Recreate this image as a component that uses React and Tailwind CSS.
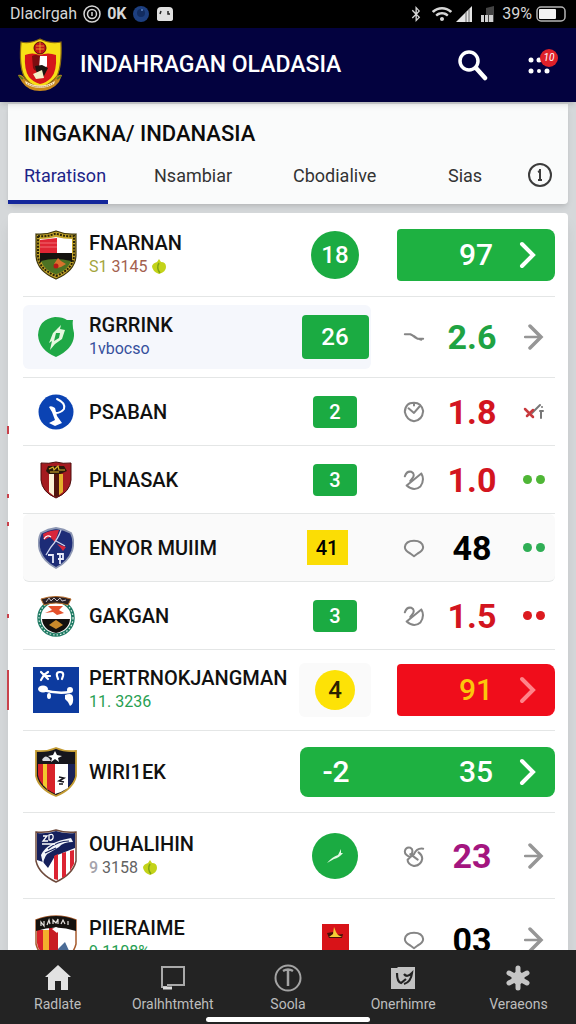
import { useState } from 'react';
import { FaWifi, FaBluetoothB } from 'react-icons/fa';

const TABS = ['Rtaratison', 'Nsambiar', 'Cbodialive', 'Sias'];

/* ---------- Crests ---------- */

const HeaderCrest = () => (
  <svg viewBox="0 0 48 54" className="w-12 h-[54px]" aria-hidden="true">
    <path d="M5 4 Q14 6 24 1 Q34 6 45 4 Q46 28 41 38 Q35 46 24 50 Q12 46 8 38 Q3 28 5 4Z" fill="#f8df16" stroke="#8a6a12" strokeWidth="1.2" />
    <path d="M9 17 Q16 14 24 17 Q32 14 40 17 Q41 34 35 40 Q30 45 24 46 Q17 44 13 39 Q8 32 9 17Z" fill="#d4151b" />
    <path d="M16 18 Q19 16 24 18 L24 30 Q20 36 17 30 Z" fill="#7d0d10" />
    <path d="M24 18 H31 V28 L27 34 L23 30Z" fill="#fff" />
    <path d="M19 28 L26 27 L32 30 L28 38 L21 36Z" fill="#1b1410" />
    <path d="M17 36 L26 32 L28 40 L20 41Z" fill="#f4efc8" />
    <circle cx="24" cy="10" r="6" fill="#c4161c" stroke="#5d0a0c" />
    <path d="M20 8 H28 M20 11 H28 M24 4 V15" stroke="#f0b32a" strokeWidth="0.8" />
    <path d="M2 37 Q6 36 9 41 Q16 48 24 48 Q33 48 39 41 Q42 36 46 37 L43 44 Q36 53 24 53 Q12 53 6 44Z" fill="#c9891d" />
    <path d="M9 43 Q24 52 39 43 L38 46 Q24 54 10 46Z" fill="#fbe8c0" />
    <path d="M11 45.5 Q24 52.500 37 45.500" fill="none" stroke="#7f4a18" strokeWidth="0.8" strokeDasharray="1 1" />
    <path d="M3 38 L7 41 M45 38 L41 41" stroke="#5b7a1e" strokeWidth="2" />
  </svg>
);

const GoldShield = () => (
  <svg viewBox="0 0 42 50" className="w-[42px] h-[50px]" aria-hidden="true">
    <path d="M1 4 Q11 5 21 1 Q31 5 41 4 V26 Q40 41 21 49 Q2 41 1 26Z" fill="#c5a52a" stroke="#3e360c" strokeWidth="1.200" />
    <path d="M3 6 Q12 7 21 3.500 Q30 7 39 6 V26 Q38 39 21 46 Q4 39 3 26Z" fill="none" stroke="#292408" strokeWidth="2" strokeDasharray="2 1.200" />
    <path d="M5 9 Q13 9 21 7 Q29 9 37 9 V24 H5Z" fill="#fff" />
    <path d="M5 10 Q13 9 22 8 V23 H5Z" fill="#df2533" />
    <path d="M5 13 H22 M5 17 H22" stroke="#f16c74" />
    <path d="M5 23 H37 V32 H5Z" fill="#15130f" />
    <path d="M6 31 Q20 27 36 31 Q33 40 21 44.500 Q9 40 6 31Z" fill="#4d7223" />
    <path d="M23 28 L26 31 L31 34 L26 37 L22 38 L19 34Z" fill="#d8722d" />
    <circle cx="21" cy="36" r="2.500" fill="#b71a17" />
  </svg>
);

const GreenLeaf = () => (
  <svg viewBox="0 0 36 42" className="w-9 h-[42px]" aria-hidden="true">
    <path d="M17 1 Q25 1 29 4 L35 4 Q34 9 36 17 Q37 32 18 41 Q1 34 0 19 Q1 3 17 1Z" fill="#1fa846" />
    <path d="M23 9 L20 12 L15 17 L11 27 L14 25 L12 34 L17 28 L24 23 L27 14 L22 13Z" fill="#e6f8df" />
    <path d="M18 17 L22 17 L21 22 L16 25Z" fill="#1fa846" />
  </svg>
);

const BlueRound = () => (
  <svg viewBox="0 0 36 36" className="w-9 h-9" aria-hidden="true">
    <circle cx="18" cy="18" r="17.500" fill="#0b43b3" />
    <path d="M19 5 Q28 9 26 15 Q23 19 17 19" fill="none" stroke="#fff" strokeWidth="2" strokeLinecap="round" />
    <path d="M11 13 Q13 11 17 14 L19 22 L24 29 L17 32 L11 29 L17 26 L14 18Z" fill="#fff" />
  </svg>
);

const RedShield = () => (
  <svg viewBox="0 0 32 38" className="w-8 h-[38px]" aria-hidden="true">
    <path d="M1 2 Q9 3 16 1 Q23 3 31 2 V19 Q30 31 16 37 Q2 31 1 19Z" fill="#a51b20" stroke="#4c0c0c" />
    <path d="M9 13 H14 V35 L9 31Z" fill="#fbf3d8" />
    <path d="M14 13 H19 V35 L16 36 L14 35Z" fill="#51140d" />
    <path d="M19 13 H23 V31 L19 34Z" fill="#e3b02b" />
    <path d="M8 5 H24 L27 10 L20 13 H9 L6 10Z" fill="#29180a" />
    <path d="M9 8 L13 6 L14 9 L18 5 L19 9 L25 9 M10 11 H19" stroke="#d9b22c" strokeWidth="1.200" fill="none" />
  </svg>
);

const NavyShield = () => (
  <svg viewBox="0 0 36 42" className="w-9 h-[42px]" aria-hidden="true">
    <path d="M3 6 Q10 2 18 1 Q26 2 33 6 Q37 14 34 24 Q30 35 18 41 Q6 35 2 24 Q-1 14 3 6Z" fill="#1d2c77" stroke="#8d97b3" strokeWidth="1.800" />
    <path d="M5 7 Q12 3 21 3 L17 15 L12 10 L6 13Z" fill="#d7263b" />
    <path d="M6 12 Q9 7 13 10" stroke="#fff" strokeWidth="1.200" fill="none" />
    <path d="M23 3 Q20 12 13 20 L8 28 M18 14 L27 19" stroke="#cfd6ee" strokeWidth="1.300" fill="none" />
    <path d="M19 17 L28 20 L25 24 L22 20Z" fill="#d7263b" />
    <path d="M10 28 H15 V36 M19 27 H25 V32 H20 M22 27 V37" stroke="#e7eafa" strokeWidth="1.800" fill="none" />
  </svg>
);

const WreathCrest = () => (
  <svg viewBox="0 0 38 42" className="w-[38px] h-[42px]" aria-hidden="true">
    <circle cx="19" cy="23" r="17" fill="#fff" stroke="#1e7a63" strokeWidth="3.500" />
    <circle cx="19" cy="23" r="17" fill="none" stroke="#e0efe9" strokeWidth="1.200" strokeDasharray="1.500 2" />
    <path d="M5 24 H33 Q32 35 19 38 Q6 35 5 24Z" fill="#13110f" />
    <path d="M19 25 L22 27 L26 30 L19 34 L12 30 L16 27Z" fill="#c88a2b" />
    <path d="M11 11 L26 11 L22 15 L27 18 L20 20 L16 17 L8 18 L15 15Z" fill="#e4512c" />
    <path d="M4 4 Q19 -1 34 4 L31 10 Q19 6 7 10Z" fill="#2b2022" stroke="#b46a2a" />
    <path d="M9 7 L12 3 L14 6 L17 3 L20 6 L23 3 L25 6 L29 5" stroke="#d2cfd8" strokeWidth="0.900" fill="none" />
  </svg>
);

const BlueSquare = () => (
  <svg viewBox="0 0 46 46" className="w-[46px] h-[46px]" aria-hidden="true">
    <rect width="46" height="46" fill="#0d3b9f" />
    <path d="M8 5 L15 12 M15 5 L11 8 L8 13 M12 9 H17" stroke="#fff" strokeWidth="2.200" fill="none" strokeLinecap="round" />
    <path d="M24 9 Q23 5 27 5 Q31 5 30 9 L29 12 M24 9 L25 12" stroke="#fff" strokeWidth="2.200" fill="none" strokeLinecap="round" />
    <ellipse cx="10" cy="22" rx="5" ry="3.500" fill="#fff" />
    <path d="M10 23 Q24 27 37 25" stroke="#fff" strokeWidth="2.500" fill="none" />
    <circle cx="37" cy="23" r="3" fill="#fff" />
    <ellipse cx="16" cy="29" rx="2" ry="3" fill="#fff" />
    <path d="M32 28 Q39 25 40 30 Q41 37 37 39 Q35 34 32 32Z" fill="#fff" />
  </svg>
);

const StripedShield = () => (
  <svg viewBox="0 0 42 50" className="w-[42px] h-[50px]" aria-hidden="true">
    <path d="M1 4 Q12 5 21 1 Q30 5 41 4 V29 Q38 42 21 49 Q4 42 1 29Z" fill="#16151c" stroke="#c39b33" strokeWidth="1.800" />
    <path d="M3 17 H9 V39 Q4 34 3 28Z" fill="#d8232a" />
    <path d="M8 17 H13 V43 L8 38Z" fill="#f2c72d" />
    <path d="M12 17 H21 V47 Q16 45 12 42Z" fill="#d8232a" />
    <path d="M20 17 H33 V41 Q27 45 20 47Z" fill="#fff" />
    <path d="M33 17 H40 V29 Q38 36 33 40Z" fill="#1b2358" />
    <path d="M20 4 L22 8 L27 9 L23 11 L24 15 L20 12 L16 15 L17 11 L13 9 L18 8Z" fill="#fff" />
    <path d="M7 13 Q10 7 14 11 L16 14 H8Z" fill="#d8d9de" />
    <path d="M24 30 L29 31 L24 34 L29 35 M24 37 H28" stroke="#16151c" strokeWidth="1.500" fill="none" />
  </svg>
);

const StripeEagle = () => (
  <svg viewBox="0 0 42 54" className="w-[42px] h-[54px]" aria-hidden="true">
    <path d="M1 3 Q12 4 21 1 Q30 4 41 3 V32 Q38 45 21 53 Q4 45 1 32Z" fill="#fff" stroke="#6e4a3c" strokeWidth="1.500" />
    <path d="M2 4 Q12 5 21 2 Q30 5 40 4 V19 L20 27 L13 39 L8 33 L2 31Z" fill="#16205c" />
    <path d="M19 27 L23 25 V51 L19 50Z M27 24 L31 23 V47 L27 49Z M35 22 L39 21 V35 L35 42Z" fill="#dc2432" />
    <path d="M6 26 Q12 13 36 9 L38 13 Q28 13 24 18 L14 24 Q10 25 8 35Z" fill="#f3f5fb" />
    <path d="M13 20 Q23 12 34 12 M10 24 L21 19" stroke="#16205c" strokeWidth="1.200" fill="none" />
    <path d="M8 7 H12 L8 12 H13 M14 6 Q19 4 18 9 Q17 12 14 11Z M7 15 H20" stroke="#fff" strokeWidth="1.300" fill="none" />
  </svg>
);

const BlackTopShield = () => (
  <svg viewBox="0 0 42 50" className="w-[42px] h-[50px]" aria-hidden="true">
    <path d="M1 5 Q21 -3 41 5 V29 Q38 42 21 49 Q4 42 1 29Z" fill="#fff" stroke="#a75b2d" strokeWidth="1.500" />
    <path d="M2 15 H10 V40 Q3 36 2 28Z" fill="#d8232a" />
    <path d="M8 15 H15 V44 L8 38Z" fill="#f3b02c" />
    <path d="M14 13 H23 V47 L14 44Z" fill="#c81d24" />
    <path d="M23 34 L30 27 L36 40 L23 47Z" fill="#4b6c96" />
    <path d="M1 5 Q21 -3 41 5 V16 Q21 9 1 16Z" fill="#15120f" />
    <path d="M6 11 V7 L9 11 V6 M12 10 L14 5 L15 9 M18 9 V5 L21 8 L23 4 V9 M26 9 L28 5 L30 9 M33 6 V10" stroke="#e7e4e0" strokeWidth="1.200" fill="none" />
    <path d="M17 14 L21 12 L25 14 L22 18Z" fill="#fff" />
  </svg>
);

/* ---------- Small marks ---------- */

const Leaf = () => (
  <svg viewBox="0 0 16 16" className="w-4 h-4" aria-hidden="true">
    <path d="M8 0 L10 3 Q15 3 15 8 Q15 13 8 15 Q1 12 1 7 Q2 4 6 3Z" fill="#c3d319" />
    <path d="M8 4 Q5 9 9 14" stroke="#7fa512" strokeWidth="1.500" fill="none" />
  </svg>
);

const MARKS = {
  dash: <path d="M2 9 L8 9 L12 11 L16 14 L22 14 M10 10 L14 13 L20 15" />,
  clock: <path d="M5 4 Q2 7 2 12 Q4 21 12 22 Q21 21 22 11 Q20 2 12 2 Q7 2 5 4 M6 8 L12 13 L18 6 M12 2 V5" />,
  swirl: <path d="M2 8 Q4 2 9 3 Q13 5 11 9 L8 13 M20 5 L4 18 M20 5 Q24 12 19 19 Q12 25 4 18" />,
  drop: <path d="M12 21 L8 18 Q2 15 2 11 Q3 4 12 4 Q21 4 22 11 Q22 15 16 18Z" />,
  heart: <path d="M8 13 Q2 11 2 7 Q3 2 8 3 Q12 5 9 11 M22 4 Q15 3 12 10 Q8 13 5 16 Q5 21 12 23 Q20 22 21 15 Q21 11 17 8 M8 10 L16 16" />,
};

const Mark = ({ name }) => (
  <svg viewBox="0 0 24 24" className="w-[22px] h-[22px]" fill="none" stroke="#858585" strokeWidth="2.200" strokeLinecap="round" strokeLinejoin="round" aria-hidden="true">
    {MARKS[name]}
  </svg>
);

const Dots = ({ className }) => (
  <span className="flex gap-1">
    <span className={`w-[9px] h-[9px] rounded-full ${className}`} />
    <span className={`w-[9px] h-[9px] rounded-full ${className}`} />
  </span>
);

const Arrow = () => (
  <svg viewBox="0 0 20 26" className="w-5 h-[26px]" fill="none" stroke="#969696" strokeLinecap="round" aria-hidden="true">
    <path d="M1 13 H16" strokeWidth="2.500" />
    <path d="M6 2 L17 13 L6 24" strokeWidth="3.500" />
  </svg>
);

const Chevron = ({ className }) => (
  <svg viewBox="0 0 18 28" className={`w-[18px] h-7 ${className}`} fill="none" stroke="currentColor" strokeWidth="4" aria-hidden="true">
    <path d="M3 3 L14 14 L3 25" strokeLinecap="round" />
  </svg>
);

const Cross = () => (
  <svg viewBox="0 0 22 18" className="w-[22px] h-[18px]" fill="none" strokeLinecap="round" aria-hidden="true">
    <path d="M9 10 L17 2" stroke="#777" strokeWidth="2" />
    <path d="M2 6 L10 14 M4 13 L10 7" stroke="#c83a3e" strokeWidth="2.500" />
    <path d="M17 8 H20 M18 8 V15" stroke="#777" strokeWidth="2" />
    <circle cx="19" cy="4" r="1" fill="#777" />
  </svg>
);

const Flag = () => (
  <svg viewBox="0 0 27 32" className="w-[27px] h-8" aria-hidden="true">
    <rect width="27" height="32" fill="#d81318" />
    <path d="M5 9 L11 8 L14 11 L21 10 L20 14 H7Z" fill="#4a1109" />
    <path d="M12 3 L14 8 L16 11 L20 13 H7 L11 10Z" fill="#f6cb35" />
  </svg>
);

const GreenSwoosh = () => (
  <span className="w-[46px] h-[46px] rounded-full bg-[#1bab42] flex items-center justify-center">
    <svg viewBox="0 0 18 16" className="w-[18px] h-4" aria-hidden="true">
      <path d="M1 15 Q6 9 12 7 L15 1 L15 5 L17 5 Q13 10 8 11Z" fill="#e2fbe3" />
    </svg>
  </span>
);

const TEAMS = [
  {
    name: 'FNARNAN', crest: <GoldShield />, height: 'h-[84px]',
    sub: <><span className="text-[#a4a53d]">S1</span> <span className="text-[#a3604e]">3145</span></>, subStyle: 'text-base', leaf: true,
    badge: '18', badgeStyle: 'w-12 h-12 rounded-full bg-[#1bab42] text-white text-2xl',
    value: '97', valueStyle: 'text-white', pill: 'bg-[#1eb141]', action: <Chevron className="text-white" />,
  },
  {
    name: 'RGRRINK', crest: <GreenLeaf />, height: 'h-[81px]', panel: 'bg-[#f5f7fc]',
    sub: '1vbocso', subStyle: 'text-base text-[#35509c]',
    badge: '26', badgeStyle: 'w-[67px] h-11 rounded bg-[#1bab42] text-white text-2xl',
    mark: 'dash', value: '2.6', valueStyle: 'text-[#1fa343]', action: <Arrow />,
  },
  {
    name: 'PSABAN', crest: <BlueRound />, height: 'h-[68px]', edge: 'top-12 h-2',
    badge: '2', badgeStyle: 'w-11 h-8 rounded bg-[#1bab42] text-white text-xl',
    mark: 'clock', value: '1.8', valueStyle: 'text-[#d3151f]', action: <Cross />,
  },
  {
    name: 'PLNASAK', crest: <RedShield />, height: 'h-[68px]', edge: 'top-12 h-1',
    badge: '3', badgeStyle: 'w-11 h-8 rounded bg-[#1bab42] text-white text-xl',
    mark: 'swirl', value: '1.0', valueStyle: 'text-[#d3151f]', action: <Dots className="bg-[#4fb636]" />,
  },
  {
    name: 'ENYOR MUIIM', crest: <NavyShield />, height: 'h-[68px]', rowStyle: 'bg-[#fafafa] rounded-md', edge: 'top-2 h-1', badgeShift: 'pr-4',
    badge: '41', badgeStyle: 'w-[41px] h-[35px] bg-[#fbdd05] text-black text-xl',
    mark: 'drop', value: '48', valueStyle: 'text-black', action: <Dots className="bg-[#2fae55]" />,
  },
  {
    name: 'GAKGAN', crest: <WreathCrest />, height: 'h-[68px]', edge: 'top-8 h-1',
    badge: '3', badgeStyle: 'w-11 h-8 rounded bg-[#1bab42] text-white text-xl',
    mark: 'swirl', value: '1.5', valueStyle: 'text-[#d3151f]', action: <Dots className="bg-[#dc1a1f]" />,
  },
  {
    name: 'PERTRNOKJANGMAN', crest: <BlueSquare />, height: 'h-[81px]', edge: 'top-5 h-10', badgePanel: 'bg-[#fafafa]',
    sub: '11. 3236', subStyle: 'text-base text-[#27a052]',
    badge: '4', badgeStyle: 'w-10 h-10 rounded-full bg-[#fde206] text-[#2b2200] text-2xl',
    value: '91', valueStyle: 'text-[#fcc60c]', pill: 'bg-[#f00d1b]', action: <Chevron className="text-[#ff8489]" />,
  },
  {
    name: 'WIRI1EK', crest: <StripedShield />, height: 'h-[82px]',
    badge: '-2', value: '35', wide: true, action: <Chevron className="text-white" />,
  },
  {
    name: 'OUHALIHIN', crest: <StripeEagle />, height: 'h-[86px]',
    sub: <><span className="font-medium text-[#a5a3ab]">9</span> 3158</>, subStyle: 'text-base text-[#636363]', leaf: true,
    badge: <GreenSwoosh />,
    mark: 'heart', value: '23', valueStyle: 'text-[#a4157f]', action: <Arrow />,
  },
  {
    name: 'PIIERAIME', crest: <BlackTopShield />, height: 'h-[82px]',
    sub: '9.1108%', subStyle: 'text-base text-[#27a052]',
    badge: <Flag />,
    mark: 'drop', value: '03', valueStyle: 'text-black', action: <Arrow />,
  },
];

const TeamRow = ({ team }) => (
  <li className={`relative flex items-center border-b border-[#e4e6e6] ${team.height} ${team.rowStyle || ''}`}>
    {team.edge && <span className={`absolute -left-4 w-0.5 bg-[#c9424c] ${team.edge}`} />}

    {/* Crest, name and badge */}
    <div className={`flex flex-1 min-w-0 items-center h-16 rounded-md ${team.panel || ''}`}>
      <span className="w-[66px] flex justify-center shrink-0">{team.crest}</span>
      <div className="flex-1 min-w-0 whitespace-nowrap">
        <p className={`text-xl font-medium text-[#111] ${team.sub ? 'leading-6' : 'leading-7'}`}>{team.name}</p>
        {team.sub && (
          <p className={`flex items-center gap-1 leading-6 ${team.subStyle}`}>
            <span>{team.sub}</span> {team.leaf && <Leaf />}
          </p>
        )}
      </div>
      {!team.wide && (
        <span className={`w-[72px] h-[54px] flex items-center justify-center rounded-md shrink-0 ${team.badgePanel || ''} ${team.badgeShift || ''}`}>
          {team.badgeStyle ? (
            <span className={`flex items-center justify-center font-medium ${team.badgeStyle}`}>{team.badge}</span>
          ) : team.badge}
        </span>
      )}
    </div>

    {/* Score and action */}
    {team.wide ? (
      <button className="flex items-center w-[255px] h-[50px] rounded-lg bg-[#1eb141] text-white font-medium text-3xl">
        <span className="w-[72px] text-center">{team.badge}</span>
        <span className="flex-1" />
        <span className="w-[50px] text-center">{team.value}</span>
        <span className="w-[54px] flex justify-center">{team.action}</span>
      </button>
    ) : team.pill ? (
      <button className={`flex items-center justify-end w-[158px] h-[52px] ml-[26px] rounded-l-sm rounded-r-lg font-medium text-3xl ${team.pill}`}>
        <span className={`w-[50px] text-center ${team.valueStyle}`}>{team.value}</span>
        <span className="w-[54px] flex justify-center">{team.action}</span>
      </button>
    ) : (
      <div className="flex items-center w-[158px] ml-[26px]">
        <span className="w-[34px] flex justify-center"><Mark name={team.mark} /></span>
        <span className={`w-[82px] text-center text-[34px] leading-9 font-bold ${team.valueStyle}`}>{team.value}</span>
        <button className="w-[42px] flex justify-center" aria-label={`Open ${team.name}`}>{team.action}</button>
      </div>
    )}
  </li>
);

const StatusBar = () => (
  <div className="h-7 px-[10px] flex items-center justify-between bg-black text-[#d6d6d6] text-base shrink-0">
    <div className="flex items-center gap-1.5">
      <span>Dlaclrgah</span>
      <svg viewBox="0 0 18 18" className="w-[18px] h-[18px]" fill="none" stroke="currentColor" strokeWidth="1.500" aria-hidden="true">
        <circle cx="9" cy="9" r="8" />
        <circle cx="9" cy="9" r="4.500" />
        <path d="M9 7 V11" />
      </svg>
      <span className="font-bold">0K</span>
      <svg viewBox="0 0 16 16" className="w-4 h-4" aria-hidden="true">
        <circle cx="8" cy="8" r="8" fill="#1d3f80" />
        <circle cx="8" cy="7" r="4" fill="#122c60" />
        <circle cx="9" cy="4" r="1" fill="#5d83c4" />
      </svg>
      <svg viewBox="0 0 16 16" className="w-4 h-4 ml-0.5" aria-hidden="true">
        <path d="M4 1 H12 Q16 1 16 5 V13 Q16 15 13 15 H3 Q0 15 0 13 V5 Q0 1 4 1Z" fill="#e0e0e0" />
        <path d="M4 5 L3 8 M11 5 V8 L13 8" stroke="#222" strokeWidth="1.500" fill="none" />
      </svg>
    </div>
    <div className="flex items-center gap-1">
      <FaBluetoothB className="text-base mr-1" />
      <FaWifi className="text-xl" />
      <svg viewBox="0 0 16 16" className="w-4 h-4" aria-hidden="true">
        <path d="M0 16 L16 0 V16Z" fill="#e5e5e5" />
        <path d="M10 6 V16 M13 3 V16" stroke="#666" />
      </svg>
      <svg viewBox="0 0 14 16" className="w-[14px] h-4 ml-1" aria-hidden="true">
        <path d="M6 8 V2 L14 0 V16 H6Z" fill="#444" />
        <path d="M1 16 V9 H4 V16Z M5 16 V9 H8 V16Z M9 16 V9 H13 V16Z" fill="#d0d0d0" />
      </svg>
      <span className="ml-1">39%</span>
      <svg viewBox="0 0 30 16" className="w-[30px] h-4" aria-hidden="true">
        <rect x="1" y="1" width="28" height="14" rx="4" fill="none" stroke="#b5b5b5" strokeWidth="1.500" />
        <rect x="3" y="3" width="17" height="10" rx="1" fill="#f2f2f2" />
      </svg>
    </div>
  </div>
);

const Header = () => (
  <header className="relative z-10 h-[74px] pl-4 pr-3 flex items-center bg-[#03023f] text-white shadow-md shrink-0">
    <HeaderCrest />
    <h1 className="flex-1 ml-4 text-[23px] font-medium whitespace-nowrap">INDAHRAGAN OLADASIA</h1>
    <button className="w-8 h-8 mr-9" aria-label="Search">
      <svg viewBox="0 0 32 32" className="w-8 h-8" fill="none" stroke="currentColor" strokeLinecap="round">
        <circle cx="13" cy="12" r="9" strokeWidth="3.500" />
        <path d="M20 19 L29 29" strokeWidth="4.500" />
      </svg>
    </button>
    <button className="relative w-10 h-9" aria-label="Menu">
      <svg viewBox="0 0 40 36" className="w-10 h-9" fill="currentColor">
        <circle cx="7" cy="13" r="2.500" /><circle cx="15" cy="13" r="2.500" />
        <circle cx="7" cy="24" r="2.500" /><circle cx="15" cy="24" r="2" /><circle cx="23" cy="24" r="2.500" />
      </svg>
      <span className="absolute top-0.5 right-1.5 w-[18px] h-[18px] rounded-full bg-[#df2029] text-[10px] leading-[18px] text-center italic">10</span>
    </button>
  </header>
);

const NAV = [
  {
    label: 'Radlate',
    icon: <path d="M14 1 L27 13 H24 V26 H17 V17 H11 V26 H4 V13 H1Z" fill="#e2e2e2" />,
  },
  {
    label: 'Oralhhtmteht',
    icon: (
      <g fill="none" stroke="#a9a9a9" strokeWidth="2">
        <path d="M8 23 H3 V3 H25 V21 H8" />
        <path d="M4 24 H13" stroke="#dcdcdc" strokeWidth="3" />
      </g>
    ),
  },
  {
    label: 'Soola',
    icon: (
      <g fill="none" stroke="#a3a3a3" strokeWidth="2">
        <circle cx="14" cy="14" r="12.500" />
        <path d="M9 7 Q14 4 19 7 M14 6 V22" strokeWidth="2.500" />
      </g>
    ),
  },
  {
    label: 'Onerhimre',
    icon: (
      <g>
        <path d="M2 4 H8 L9 3 H26 V25 H2Z" fill="#c2c2c2" />
        <path d="M8 9 Q8 18 12 19 L17 15 M15 10 Q18 14 23 9 Q22 18 15 20" stroke="#222" strokeWidth="2.200" fill="none" />
      </g>
    ),
  },
  {
    label: 'Veraeons',
    icon: (
      <g stroke="#c6c6c6" strokeWidth="5" strokeLinecap="round">
        <path d="M14 4 V24 M5 9 L23 19 M23 9 L5 19" />
        <circle cx="14" cy="14" r="4" fill="#c6c6c6" />
      </g>
    ),
  },
];

const BottomNav = () => (
  <nav className="relative h-[74px] grid grid-cols-5 bg-[#232323] text-[#bdbdbd] shrink-0">
    {NAV.map((item) => (
      <a key={item.label} href="#" className="flex flex-col items-center pt-[14px] text-sm leading-5">
        <svg viewBox="0 0 28 28" className="w-7 h-7 mb-0.5" aria-hidden="true">{item.icon}</svg>
        {item.label}
      </a>
    ))}
    <span className="absolute bottom-0.5 left-1/2 -translate-x-1/2 w-[164px] h-[5px] rounded-full bg-white" />
  </nav>
);

const App = () => {
  const [activeTab, setActiveTab] = useState(TABS[0]);

  return (
    <div className="h-screen flex flex-col overflow-hidden bg-[#d5d8da] font-[Roboto,sans-serif]">
      <StatusBar />
      <Header />

      <main className="flex-1 min-h-0 overflow-hidden px-2 pt-0.5">
        {/* Title and tabs */}
        <section className="h-[100px] mb-[9px] flex flex-col justify-between rounded-b bg-[#fafbfb] shadow-md">
          <h2 className="px-4 pt-[14px] text-[22px] leading-8 font-medium text-[#0c0c0c]">IINGAKNA/ INDANASIA</h2>
          <div className="grid grid-cols-[130fr_139fr_155fr_80fr_56fr] text-lg text-[#333]">
            {TABS.map((tab) => (
              <button
                key={tab}
                onClick={() => setActiveTab(tab)}
                className={`justify-self-start h-12 pl-4 pr-0.5 pb-1 border-b-4 text-left ${activeTab === tab ? 'border-[#14279b] text-[#1d2488]' : 'border-transparent'}`}
              >
                {tab}
              </button>
            ))}
            <button className="h-12 pb-2 flex items-end justify-center" aria-label="Info">
              <svg viewBox="0 0 26 26" className="w-[26px] h-[26px] mb-2" fill="none" stroke="#3c3c3c" strokeWidth="2">
                <circle cx="13" cy="13" r="11" />
                <path d="M11 10 L13 9 V18 M11 18 H15 M13 7 V9" />
              </svg>
            </button>
          </div>
        </section>

        {/* Team list */}
        <ul className="pl-[15px] pr-[13px] bg-white rounded-t-sm shadow-lg">
          {TEAMS.map((team) => (
            <TeamRow key={team.name} team={team} />
          ))}
        </ul>
      </main>

      <BottomNav />
    </div>
  );
};

export default App;
